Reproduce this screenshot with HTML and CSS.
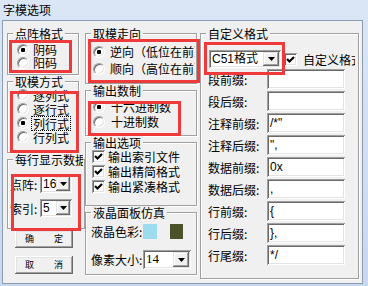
FILE: index.html
```html
<!DOCTYPE html>
<html>
<head>
<meta charset="utf-8">
<link rel="stylesheet" href="styles.css">
</head>
<body>
<div class="win">
  <div class="titlebar">字模选项</div>
  <div class="client">
    <div class="col col-left">
      <fieldset class="grp g1">
        <legend>点阵格式</legend>
        <div class="gb">
          <div class="opt r13"><span class="radio on"></span><span>阴码</span></div>
          <div class="opt r13"><span class="radio"></span><span>阳码</span></div>
        </div>
      </fieldset>
      <fieldset class="grp g2">
        <legend>取模方式</legend>
        <div class="gb">
          <div class="opt r14"><span class="radio"></span><span>逐列式</span></div>
          <div class="opt r14"><span class="radio"></span><span>逐行式</span></div>
          <div class="opt r14"><span class="radio on"></span><span class="focus">列行式</span></div>
          <div class="opt r14"><span class="radio"></span><span>行列式</span></div>
        </div>
      </fieldset>
      <fieldset class="grp g3">
        <legend class="clip">每行显示数据</legend>
        <div class="gb">
          <div class="field">
            <span class="lbl-s">点阵:</span>
            <div class="combo sm"><span class="val sans">16</span><span class="drop"><svg width="7" height="4" viewBox="0 0 7 4"><polygon points="0,0 7,0 3.5,4" fill="#000"/></svg></span></div>
          </div>
          <div class="field">
            <span class="lbl-s">索引:</span>
            <div class="combo sm"><span class="val sans">5</span><span class="drop"><svg width="7" height="4" viewBox="0 0 7 4"><polygon points="0,0 7,0 3.5,4" fill="#000"/></svg></span></div>
          </div>
        </div>
      </fieldset>
      <button class="btn b1"><span>确</span><span>定</span></button>
      <button class="btn b2"><span>取</span><span>消</span></button>
    </div>

    <div class="col col-mid">
      <fieldset class="grp m1">
        <legend>取模走向</legend>
        <div class="gb">
          <div class="opt r17 cut"><span class="radio on"></span><span>逆向（低位在前）</span></div>
          <div class="opt r17 cut"><span class="radio"></span><span>顺向（高位在前）</span></div>
        </div>
      </fieldset>
      <fieldset class="grp m2">
        <legend>输出数制</legend>
        <div class="gb">
          <div class="opt r15 wide"><span class="radio on"></span><span>十六进制数</span></div>
          <div class="opt r15 wide"><span class="radio"></span><span>十进制数</span></div>
        </div>
      </fieldset>
      <fieldset class="grp m3">
        <legend>输出选项</legend>
        <div class="gb">
          <div class="opt r15 chk cut"><span class="check"><svg width="9" height="9" viewBox="0 0 9 9"><polyline points="1,4 3.5,6.5 8,2" fill="none" stroke="#000" stroke-width="2.2"/></svg></span><span>输出索引文件</span></div>
          <div class="opt r15 chk cut"><span class="check"><svg width="9" height="9" viewBox="0 0 9 9"><polyline points="1,4 3.5,6.5 8,2" fill="none" stroke="#000" stroke-width="2.2"/></svg></span><span>输出精简格式</span></div>
          <div class="opt r15 chk cut"><span class="check"><svg width="9" height="9" viewBox="0 0 9 9"><polyline points="1,4 3.5,6.5 8,2" fill="none" stroke="#000" stroke-width="2.2"/></svg></span><span>输出紧凑格式</span></div>
        </div>
      </fieldset>
      <fieldset class="grp m4">
        <legend>液晶面板仿真</legend>
        <div class="gb">
          <div class="field lcd">
            <span class="lbl-m">液晶色彩:</span>
            <span class="swatch light"></span>
            <span class="swatch dark"></span>
          </div>
          <div class="field px">
            <span class="lbl-m">像素大小:</span>
            <div class="combo md"><span class="val serif">14</span><span class="drop"><svg width="7" height="4" viewBox="0 0 7 4"><polygon points="0,0 7,0 3.5,4" fill="#000"/></svg></span></div>
          </div>
        </div>
      </fieldset>
    </div>

    <div class="col col-right">
      <fieldset class="grp r1">
        <legend>自定义格式</legend>
        <div class="gb">
          <div class="toprow">
            <div class="combo lg"><span class="val sans">C51格式</span><span class="drop"><svg width="7" height="4" viewBox="0 0 7 4"><polygon points="0,0 7,0 3.5,4" fill="#000"/></svg></span></div>
            <span class="check"><svg width="9" height="9" viewBox="0 0 9 9"><polyline points="1,4 3.5,6.5 8,2" fill="none" stroke="#000" stroke-width="2.2"/></svg></span>
            <span class="cklbl">自定义格式</span>
          </div>
          <div class="frow"><span class="lbl-r">段前缀:</span><span class="edit"></span></div>
          <div class="frow"><span class="lbl-r">段后缀:</span><span class="edit"></span></div>
          <div class="frow"><span class="lbl-r">注释前缀:</span><span class="edit">/*"</span></div>
          <div class="frow"><span class="lbl-r">注释后缀:</span><span class="edit">",</span></div>
          <div class="frow"><span class="lbl-r">数据前缀:</span><span class="edit">0x</span></div>
          <div class="frow"><span class="lbl-r">数据后缀:</span><span class="edit">,</span></div>
          <div class="frow"><span class="lbl-r">行前缀:</span><span class="edit">{</span></div>
          <div class="frow"><span class="lbl-r">行后缀:</span><span class="edit">},</span></div>
          <div class="frow"><span class="lbl-r">行尾缀:</span><span class="edit">*/</span></div>
        </div>
      </fieldset>
    </div>

    <div class="mark k1"></div>
    <div class="mark k2"></div>
    <div class="mark k3"></div>
    <div class="mark k4"></div>
    <div class="mark k5"></div>
    <div class="mark k6"></div>
  </div>
</div>
</body>
</html>
```

FILE: styles.css
```css
* { box-sizing: border-box; }
html, body { margin: 0; padding: 0; }
body {
  width: 368px; height: 286px; overflow: hidden;
  font-family: "Noto Sans CJK SC", "Noto Sans", sans-serif;
  font-size: 12px; color: #000;
}
.win {
  width: 368px; height: 286px;
  background: linear-gradient(#dae6f5, #c8d8ee);
  display: flex; flex-direction: column;
}
.titlebar {
  height: 20px; padding: 2px 0 0 3px;
  font-size: 12px; line-height: 16px;
}
.client {
  position: relative;
  margin-left: 2px; width: 361px; height: 264px;
  background: #f0f0f0;
  border: 1px solid #8d9db1;
  display: flex; align-items: flex-start;
  padding: 6px 0 0 4px;
}
.col { display: flex; flex-direction: column; }
.col-left { width: 78px; }
.col-mid { width: 112px; }
.col-right { width: 160px; margin-left: 3px; }

fieldset.grp {
  margin: 0; padding: 0; min-width: 0;
  border: 1px solid #a0a0a0;
  box-shadow: inset 1px 1px #fff, 1px 1px #fff;
}
legend {
  padding: 0 2px; margin-left: 5px;
  font-size: 12px; line-height: 13px; white-space: nowrap;
  background: #f0f0f0;
}
legend.clip { width: 70px; overflow: hidden; }

.g1 { width: 72px; height: 48px; }
.g2 { width: 72px; height: 78px; margin-top: 4px; }
.g3 { width: 78px; height: 76px; margin-top: 1px; }
.g1 .gb { padding: 3px 0 0 9px; }
.g2 .gb { padding-left: 9px; }
.g3 .gb { padding: 9px 0 0 2px; display: flex; flex-direction: column; gap: 6px; }

.m1 { width: 112px; height: 57px; }
.m2 { width: 112px; height: 52px; margin-top: 2px; }
.m3 { width: 112px; height: 70px; margin-top: 0; }
.m4 { width: 112px; height: 69px; margin-top: 1px; }
.m1 .gb { padding: 3px 1px 0 7px; }
.m2 .gb { padding: 2px 1px 0 7px; }
.m3 .gb { padding: 0 1px 0 6px; }
.m4 .gb { padding: 5px 0 0 5px; }

.r1 { width: 159px; height: 252px; }
.r1 .gb { padding: 10px 0 0 7px; }

.opt {
  display: flex; align-items: center; gap: 4px;
  white-space: nowrap;
  line-height: 13px;
}
.opt.cut { overflow: hidden; }
.r13 { height: 13px; }
.r14 { height: 14px; }
.r15 { height: 15px; }
.r17 { height: 17px; gap: 5px; }
.wide { gap: 6px; }
.chk { gap: 3px; }

.radio {
  flex: none; position: relative;
  width: 12px; height: 12px; border-radius: 50%;
  background: #fff;
  border: 1px solid; border-color: #a0a0a0 #fff #fff #a0a0a0;
  box-shadow: inset 1px 1px #696969, inset -1px -1px #e3e3e3;
}
.radio.on::after {
  content: ""; position: absolute; left: 3px; top: 3px;
  width: 4px; height: 4px; border-radius: 1px; background: #000;
}
.focus { outline: 1px dotted #000; outline-offset: 0; padding: 0 1px; margin-left: -1px; }

.check {
  flex: none; width: 13px; height: 13px;
  background: #fff;
  box-shadow: inset 1px 1px #a0a0a0, inset -1px -1px #fff, inset 2px 2px #696969, inset -2px -2px #e3e3e3;
  display: flex; align-items: center; justify-content: center;
}

.field { display: flex; align-items: center; }
.lbl-s { width: 30px; white-space: nowrap; }
.lbl-m { width: 52px; white-space: nowrap; }

.combo {
  display: flex; height: 18px; padding: 2px;
  background: #fff;
  box-shadow: inset 1px 1px #a0a0a0, inset -1px -1px #fff, inset 2px 2px #696969, inset -2px -2px #e3e3e3;
}
.combo .val { flex: 1; padding-left: 1px; line-height: 14px; overflow: hidden; white-space: nowrap; }
.combo .drop {
  flex: none; width: 16px; height: 14px;
  background: #f0f0f0;
  box-shadow: inset -1px -1px #696969, inset 1px 1px #e3e3e3, inset -2px -2px #a0a0a0, inset 2px 2px #fff;
  display: flex; align-items: center; justify-content: center;
}
.combo.sm { width: 32px; }
.combo.sm .drop { width: 14px; }
.combo.md { width: 48px; height: 19px; }
.combo.md .drop { height: 15px; }
.combo.lg { width: 72px; flex: none; }
.sans { font-family: "Liberation Sans", Arial, sans-serif; font-size: 12px; }
.serif { font-family: "Liberation Serif", serif; font-size: 13px; }
.combo.lg .val { font-family: "Liberation Sans", "Noto Sans CJK SC", sans-serif; }

.lcd { height: 15px; }
.swatch { width: 14px; height: 15px; }
.swatch.light { background: #9ddcef; }
.swatch.dark { background: #4b5128; width: 13px; margin-left: 13px; }
.px { margin-top: 11px; }

.toprow { display: flex; align-items: center; width: 147px; height: 18px; white-space: nowrap; overflow: hidden; }
.toprow .combo { margin-left: 1px; }
.toprow .check { margin-left: 3px; }
.cklbl { margin-left: 6px; }

.frow { display: flex; align-items: center; height: 22px; }
.lbl-r { width: 59px; white-space: nowrap; }
.edit {
  width: 78px; height: 20px; padding: 2px 3px;
  background: #fff;
  box-shadow: inset 1px 1px #a0a0a0, inset -1px -1px #fff, inset 2px 2px #696969, inset -2px -2px #e3e3e3;
  font-family: "Liberation Sans", Arial, sans-serif; font-size: 12px; line-height: 16px;
}

.btn {
  margin: 0; padding: 0;
  width: 58px; height: 18px; margin-left: 8px;
  border: none; background: #f0f0f0;
  box-shadow: inset -1px -1px #696969, inset 1px 1px #fff, inset -2px -2px #a0a0a0, inset 2px 2px #e3e3e3;
  font-family: "Noto Sans CJK SC", sans-serif; font-size: 9px; line-height: 10px;
  display: flex; align-items: center; justify-content: center; gap: 20px;
}
.b1 { margin-top: 1px; }
.b2 { margin-top: 8px; }

.mark {
  position: absolute;
  border: 3px solid #ee3a3a;
  pointer-events: none;
}
.k1 { left: 6px; top: 19px; width: 63px; height: 33px; }
.k2 { left: 7px; top: 70px; width: 69px; height: 62px; }
.k3 { left: 8px; top: 153px; width: 70px; height: 57px; }
.k4 { left: 85px; top: 18px; width: 112px; height: 44px; }
.k5 { left: 85px; top: 80px; width: 93px; height: 35px; }
.k6 { left: 201px; top: 21px; width: 81px; height: 33px; }
```
